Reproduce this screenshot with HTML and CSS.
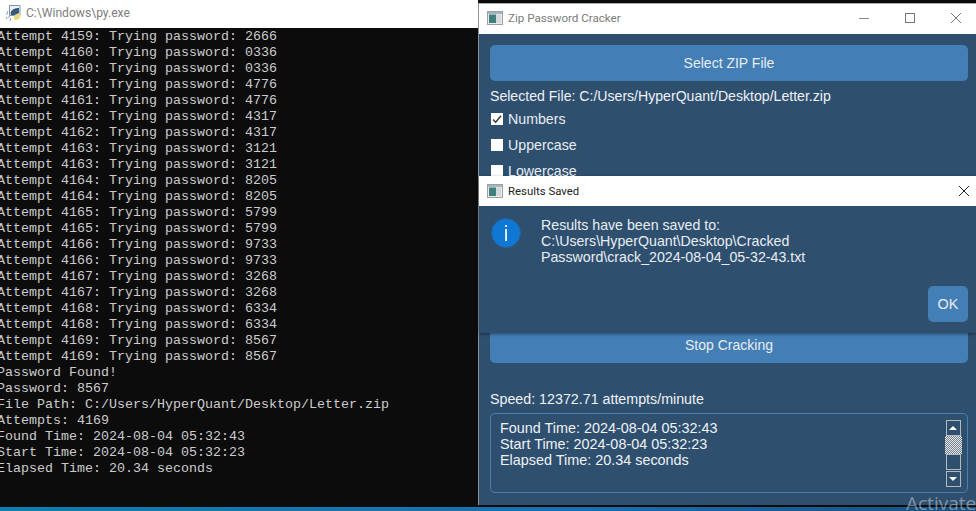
FILE: index.html
```html
<!DOCTYPE html>
<html lang="en">
<head>
<meta charset="utf-8">
<title>Zip Password Cracker</title>
<link rel="stylesheet" href="styles.css">
</head>
<body>
<svg class="defs" width="0" height="0" aria-hidden="true">
  <symbol id="appicon" viewBox="0 0 16 14">
    <rect x="0.5" y="0.5" width="15" height="13" fill="#e8ecec" stroke="#9aa0a4"/>
    <rect x="1" y="1" width="14" height="2" fill="#aab4bc"/>
    <rect x="2" y="3.5" width="7" height="8.5" fill="#3f7f7c"/>
    <rect x="9" y="3.5" width="5" height="8.5" fill="#d4dadc"/>
  </symbol>
</svg>

<section class="window console-window">
  <header class="console-title">
    <svg class="py-icon" width="16" height="18" viewBox="0 0 16 18" aria-hidden="true">
      <path d="M4.5 1.5h10.5v10H4.500z" fill="#eef2f6" stroke="#7d93ab"/>
      <path d="M5.500 9c1-4 5-5 8.500-5v5l-3 2H6z" fill="#34587f"/>
      <path d="M9 12c1-2 5-3 6-2 1 3-1 6-4 6-2 0-3-2-2-4z" fill="#ecd87c"/>
      <path d="M3 7 1.500 11M5 11l-1.500 3M2 13l-.5 2M6 14l-1 3" stroke="#7f9bb8" fill="none"/>
    </svg>
    <span>C:\Windows\py.exe</span>
  </header>
  <pre class="console-output">Attempt 4159: Trying password: 2666
Attempt 4160: Trying password: 0336
Attempt 4160: Trying password: 0336
Attempt 4161: Trying password: 4776
Attempt 4161: Trying password: 4776
Attempt 4162: Trying password: 4317
Attempt 4162: Trying password: 4317
Attempt 4163: Trying password: 3121
Attempt 4163: Trying password: 3121
Attempt 4164: Trying password: 8205
Attempt 4164: Trying password: 8205
Attempt 4165: Trying password: 5799
Attempt 4165: Trying password: 5799
Attempt 4166: Trying password: 9733
Attempt 4166: Trying password: 9733
Attempt 4167: Trying password: 3268
Attempt 4167: Trying password: 3268
Attempt 4168: Trying password: 6334
Attempt 4168: Trying password: 6334
Attempt 4169: Trying password: 8567
Attempt 4169: Trying password: 8567
Password Found!
Password: 8567
File Path: C:/Users/HyperQuant/Desktop/Letter.zip
Attempts: 4169
Found Time: 2024-08-04 05:32:43
Start Time: 2024-08-04 05:32:23
Elapsed Time: 20.34 seconds</pre>
</section>

<section class="window app-window">
  <header class="titlebar">
    <svg class="app-icon" aria-hidden="true"><use href="#appicon"/></svg>
    <span class="title-text">Zip Password Cracker</span>
    <span class="title-controls">
      <svg width="12" height="12" viewBox="0 0 12 12" aria-hidden="true"><path d="M1 6.500h10" stroke="#8a8a8a"/></svg>
      <svg width="12" height="12" viewBox="0 0 12 12" aria-hidden="true"><rect x="1.500" y="1.500" width="9" height="9" fill="none" stroke="#777"/></svg>
      <svg width="12" height="12" viewBox="0 0 12 12" aria-hidden="true"><path d="M1 1l10 10M11 1 1 11" stroke="#777"/></svg>
    </span>
  </header>
  <div class="app-body">
    <button class="btn btn-wide">Select ZIP File</button>
    <p class="label selected">Selected File: C:/Users/HyperQuant/Desktop/Letter.zip</p>
    <div class="check-row"><span class="box"><svg width="12" height="12" viewBox="0 0 12 12" aria-hidden="true"><path d="M2 6.500 4.700 9.300 10 2.800" fill="none" stroke="#333" stroke-width="1.400"/></svg></span>Numbers</div>
    <div class="check-row"><span class="box"></span>Uppercase</div>
    <div class="check-row"><span class="box"></span>Lowercase</div>
    <div class="hidden-gap"></div>
    <button class="btn btn-wide btn-stop">Stop Cracking</button>
    <p class="label speed">Speed: 12372.71 attempts/minute</p>
    <div class="result-box">
      <div class="result-text">Found Time: 2024-08-04 05:32:43<br>Start Time: 2024-08-04 05:32:23<br>Elapsed Time: 20.34 seconds</div>
      <div class="scrollbar">
        <span class="sb-btn"><i class="arrow-up"></i></span>
        <span class="sb-thumb"></span>
        <span class="sb-track"></span>
        <span class="sb-btn"><i class="arrow-down"></i></span>
      </div>
    </div>
  </div>
</section>

<section class="dialog">
  <header class="dialog-title">
    <svg class="app-icon" aria-hidden="true"><use href="#appicon"/></svg>
    <span class="dialog-title-text">Results Saved</span>
    <svg class="dialog-close" width="12" height="12" viewBox="0 0 12 12" aria-hidden="true"><path d="M1 1l10 10M11 1 1 11" stroke="#222"/></svg>
  </header>
  <div class="dialog-body">
    <div class="dialog-main">
      <svg class="info-icon" width="30" height="30" viewBox="0 0 30 30" aria-hidden="true">
        <circle cx="15" cy="15" r="14.500" fill="#0f78d4" stroke="#2a5f96"/>
        <rect x="14.200" y="7" width="1.700" height="2" fill="#fff"/>
        <rect x="14.200" y="11" width="1.700" height="12" fill="#fff"/>
      </svg>
      <p class="dialog-text">Results have been saved to:<br>C:\Users\HyperQuant\Desktop\Cracked<br>Password\crack_2024-08-04_05-32-43.txt</p>
    </div>
    <div class="dialog-actions"><button class="btn btn-ok">OK</button></div>
  </div>
</section>

<div class="taskbar"></div>
<div class="watermark">Activate</div>
</body>
</html>
```
FILE: styles.css
```css
* { box-sizing: border-box; }
html, body { margin: 0; padding: 0; }
body {
  width: 976px;
  height: 511px;
  overflow: hidden;
  position: relative;
  background: #0c0c0c;
  font-family: "Liberation Sans", Arial, sans-serif;
}
.defs { position: absolute; }
.window, .dialog, .taskbar, .watermark { position: absolute; }

.console-window { left: 0; top: 0; width: 478px; height: 507px; background: #0c0c0c; overflow: hidden; }
.console-title {
  height: 28px;
  background: #fff;
  display: flex;
  align-items: center;
  gap: 5px;
  padding: 0 0 2px 5px;
  color: #7d7d7d;
  font: 12.1px Roboto, sans-serif;
}
.console-output {
  margin: 0 0 0 -3px;
  padding-top: 1px;
  font: 13.33px/16px "Liberation Mono", monospace;
  color: #cccccc;
}

.app-window {
  left: 478px;
  top: 3px;
  width: 498px;
  height: 502px;
  border-top: 1px solid #a9adb1;
  border-left: 1px solid #8d9296;
  background: #2f4f6f;
  display: flex;
  flex-direction: column;
}
.titlebar {
  height: 30px;
  flex: none;
  background: #fff;
  display: flex;
  align-items: center;
  padding: 0 0 2px 8px;
}
.app-icon { width: 16px; height: 14px; flex: none; }
.title-text { margin-left: 5px; font: 11.6px Roboto, sans-serif; color: #7b7b7b; }
.title-controls { margin-left: auto; display: flex; gap: 34px; padding-right: 14px; }
.app-body { flex: 1; padding: 11px 8px 0 11px; display: flex; flex-direction: column; }

.btn {
  border: 0;
  border-radius: 5px;
  background: #437eb4;
  color: #e8edf2;
  font: 14px "Liberation Sans", Arial, sans-serif;
  padding: 0;
}
.btn-wide { width: 478px; height: 36px; flex: none; }
.label { margin: 0; font-size: 14.4px; color: #eef2f6; line-height: 17px; }
.selected { margin-top: 7px; font-size: 14.1px; }
.check-row {
  display: flex;
  align-items: center;
  gap: 5px;
  height: 26px;
  font-size: 14.2px;
  color: #e8edf2;
}
.check-row:first-of-type { margin-top: 1px; }
.box {
  width: 12px;
  height: 12px;
  margin-left: 1px;
  background: #fff;
  display: block;
  flex: none;
}
.box svg { display: block; }
.hidden-gap { height: 143px; flex: none; }
.speed { margin-top: 28px; font-size: 14.25px; }
.result-box {
  margin-top: 5px;
  width: 478px;
  height: 80px;
  border: 1px solid #4a7fb0;
  border-radius: 5px;
  position: relative;
  display: flex;
  justify-content: space-between;
  padding: 6px 6px 0 9px;
}
.result-text { font-size: 14.4px; line-height: 16px; color: #eef2f6; }
.scrollbar { width: 16px; display: flex; flex-direction: column; align-items: center; }
.sb-btn, .sb-track {
  width: 15px;
  border: 1px solid #b4bac0;
  display: flex;
  align-items: center;
  justify-content: center;
}
.sb-btn { height: 16px; flex: none; }
.sb-thumb {
  width: 17px;
  height: 18px;
  flex: none;
  background: repeating-conic-gradient(#e8e8e8 0 25%, #6f7f90 0 50%) 0 0 / 2px 2px;
}
.sb-track { height: 16px; flex: none; margin: 0 0 1px; }
.arrow-up, .arrow-down { width: 0; height: 0; border-left: 4px solid transparent; border-right: 4px solid transparent; }
.arrow-up { border-bottom: 4px solid #fff; }
.arrow-down { border-top: 4px solid #fff; }

.dialog {
  left: 479px;
  top: 176px;
  width: 497px;
  height: 157px;
  background: #2f4f6f;
  box-shadow: 0 1px 3px rgba(0, 0, 0, 0.45);
  display: flex;
  flex-direction: column;
}
.dialog-title {
  height: 30px;
  flex: none;
  background: #fff;
  display: flex;
  align-items: center;
  padding: 0 6px 0 8px;
}
.dialog-title-text { margin-left: 5px; font: 11.4px Roboto, sans-serif; color: #222; }
.dialog-close { margin-left: auto; }
.dialog-body { flex: 1; display: flex; flex-direction: column; padding: 12px 8px 11px 12px; }
.dialog-main { display: flex; gap: 20px; flex: 1; }
.info-icon { flex: none; }
.dialog-text { margin: -1px 0 0; font-size: 14.2px; line-height: 16px; color: #e8edf2; }
.dialog-actions { display: flex; justify-content: flex-end; }
.btn-ok { width: 40px; height: 36px; font-size: 14.4px; }

.taskbar {
  left: 0;
  top: 507px;
  width: 976px;
  height: 4px;
  background: linear-gradient(90deg, #0f7fb0, #1a6fb0 60%, #17507f);
}
.watermark {
  left: 906px;
  top: 490px;
  font: 19px "Open Sans", sans-serif;
  color: rgba(210, 220, 230, 0.5);
  white-space: nowrap;
}
```
